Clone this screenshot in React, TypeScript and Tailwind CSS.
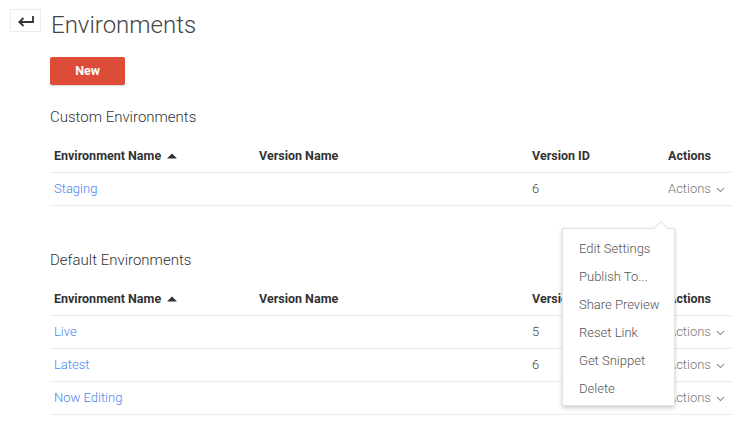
import React from "react";

const font = { fontFamily: "Roboto, 'Liberation Sans', sans-serif" };

function Chevron() {
  return (
    <svg width="9" height="6" viewBox="0 0 9 6" className="ml-[5px] mt-[1px]">
      <path d="M1 1.2 L4.5 4.6 L8 1.2" fill="none" stroke="#888" strokeWidth="1.1" />
    </svg>
  );
}

function SortUp() {
  return (
    <svg width="10" height="6" viewBox="0 0 10 6" className="ml-[6px] mb-[2px]">
      <path d="M0 5.5 L5 0.5 L10 5.5 Z" fill="#333" />
    </svg>
  );
}

type Row = { name: string; id: string };

function Table({ rows }: { rows: Row[] }) {
  const cols = "grid grid-cols-[205px_273px_136px_68px]";
  return (
    <div className="w-[682px]">
      <div className={`${cols} h-[32px] items-center border-b border-[#ebebeb] text-[12.5px] font-bold text-[#333]`}>
        <div className="pl-[4px] flex items-center">
          Environment Name
          <SortUp />
        </div>
        <div className="pl-[4px]">Version Name</div>
        <div className="pl-[4px]">Version ID</div>
        <div className="pl-[4px]">Actions</div>
      </div>
      {rows.map((r) => (
        <div key={r.name} className={`${cols} h-[33px] items-center border-b border-[#ebebeb] text-[13px] font-light`}>
          <div className="pl-[4px] text-[#4d85f0]">{r.name}</div>
          <div></div>
          <div className="pl-[4px] text-[#444]">{r.id}</div>
          <div className="pl-[4px] flex items-center text-[#777]">
            Actions
            <Chevron />
          </div>
        </div>
      ))}
    </div>
  );
}

export default function App() {
  const items = ["Edit Settings", "Publish To...", "Share Preview", "Reset Link", "Get Snippet", "Delete"];
  return (
    <div className="relative w-[750px] h-[427px] bg-white overflow-hidden" style={font}>
      <div className="flex items-start">
        <div className="mt-[9px] ml-[10px] w-[31px] h-[23px] border border-[#ececec] flex items-center justify-center">
          <svg width="18" height="12" viewBox="0 0 18 12">
            <path d="M16 1 V7 H2.5" fill="none" stroke="#333" strokeWidth="1.8" />
            <path d="M6.5 3 L2.3 7 L6.5 11" fill="none" stroke="#333" strokeWidth="1.8" />
          </svg>
        </div>
        <div className="mt-[13px] ml-[10px] text-[24px] leading-[24px] text-[#444] font-light">Environments</div>
      </div>
      <div className="pl-[50px]">
        <button className="mt-[20px] w-[75px] h-[28px] rounded-[2px] bg-[#dd4b39] text-white text-[12.5px] font-bold shadow-[0_1px_1px_rgba(0,0,0,0.15)]">
          New
        </button>
        <div className="mt-[22px] h-[20px] leading-[20px] text-[15px] text-[#333] font-light">Custom Environments</div>
        <div className="mt-[14px]">
          <Table rows={[{ name: "Staging", id: "6" }]} />
        </div>
        <div className="mt-[44px] h-[20px] leading-[20px] text-[15px] text-[#333] font-light">Default Environments</div>
        <div className="mt-[14px]">
          <Table
            rows={[
              { name: "Live", id: "5" },
              { name: "Latest", id: "6" },
              { name: "Now Editing", id: "" },
            ]}
          />
        </div>
      </div>
      <div className="absolute left-[562px] top-[228px] w-[113px] bg-white border border-[#e2e2e2] shadow-[0_2px_4px_rgba(0,0,0,0.2)] pt-[6px] pb-[2px]">
        <div className="absolute left-[93px] top-[-6px] w-[10px] h-[10px] bg-white border-l border-t border-[#e2e2e2] rotate-45"></div>
        {items.map((t) => (
          <div key={t} className="relative h-[28px] leading-[28px] pl-[16px] text-[13px] text-[#555] font-light">
            {t}
          </div>
        ))}
      </div>
    </div>
  );
}
